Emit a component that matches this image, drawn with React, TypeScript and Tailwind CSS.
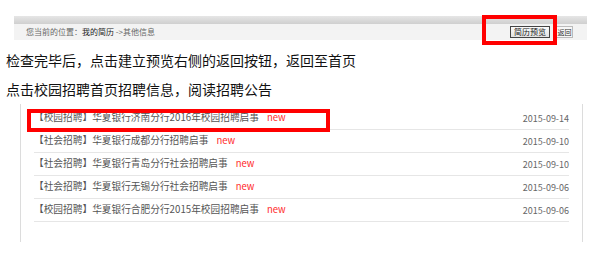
import React from "react";

const rows = [
  { tag: "校园招聘", title: "华夏银行济南分行2016年校园招聘启事", date: "2015-09-14" },
  { tag: "社会招聘", title: "华夏银行成都分行招聘启事", date: "2015-09-10" },
  { tag: "社会招聘", title: "华夏银行青岛分行社会招聘启事", date: "2015-09-10" },
  { tag: "社会招聘", title: "华夏银行无锡分行社会招聘启事", date: "2015-09-06" },
  { tag: "校园招聘", title: "华夏银行合肥分行2015年校园招聘启事", date: "2015-09-06" },
];

export default function App() {
  return (
    <div
      className="relative w-[596px] h-[254px] bg-white overflow-hidden"
      style={{ fontFamily: '"Noto Sans CJK SC", "Noto Sans", sans-serif' }}
    >
      {/* header bar */}
      <div className="mt-[16px] ml-[14px] w-[573px]">
        <div className="h-[8px] bg-gradient-to-b from-[#e6e6e6] to-[#cfcfcf]" />
        <div className="h-[16px] bg-[#f3f3f3] flex items-center justify-between pl-[12px] pr-[14px]">
          <div className="text-[8px] leading-none text-[#666] whitespace-nowrap">
            您当前的位置：<span className="text-[#222]">我的简历</span> -&gt;其他信息
          </div>
          <div className="flex items-center gap-[6px]">
            <div className="w-[40px] h-[12px] border border-[#444] bg-gradient-to-b from-[#fafafa] to-[#e2e2e2] flex items-center justify-center text-[8px] leading-none text-[#222] whitespace-nowrap">
              简历预览
            </div>
            <div className="w-[17px] h-[12px] border border-[#bbb] bg-[#f6f6f6] flex items-center justify-center text-[7px] leading-none text-[#333] whitespace-nowrap">
              返回
            </div>
          </div>
        </div>
      </div>

      {/* instructions */}
      <div className="mt-[6px] pl-[6px] text-[14px] leading-[29px] text-[#111]">
        <p>检查完毕后，点击建立预览右侧的返回按钮，返回至首页</p>
        <p>点击校园招聘首页招聘信息，阅读招聘公告</p>
      </div>

      {/* list */}
      <div className="ml-[20px] w-[563px] h-[138px] border-l border-r border-[#dcdcdc] pt-[3px] px-[13px]">
        {rows.map((r, i) => (
          <div
            key={i}
            className="h-[23px] border-b border-[#e6e6e6] flex items-center justify-between"
          >
            <div className="flex items-center text-[9.7px] leading-none text-[#555] whitespace-nowrap">
              <span>【{r.tag}】{r.title}</span>
              <span className="ml-[8px] text-[9.5px] text-[#ff2a2a]">new</span>
            </div>
            <div className="text-[9px] leading-none text-[#666]">{r.date}</div>
          </div>
        ))}
      </div>

      {/* annotation boxes */}
      <div className="absolute left-[482px] top-[15px] w-[75px] h-[30px] border-4 border-[#ff0000]" />
      <div className="absolute left-[27px] top-[109px] w-[303px] h-[23px] border-4 border-[#ff0000]" />
    </div>
  );
}
